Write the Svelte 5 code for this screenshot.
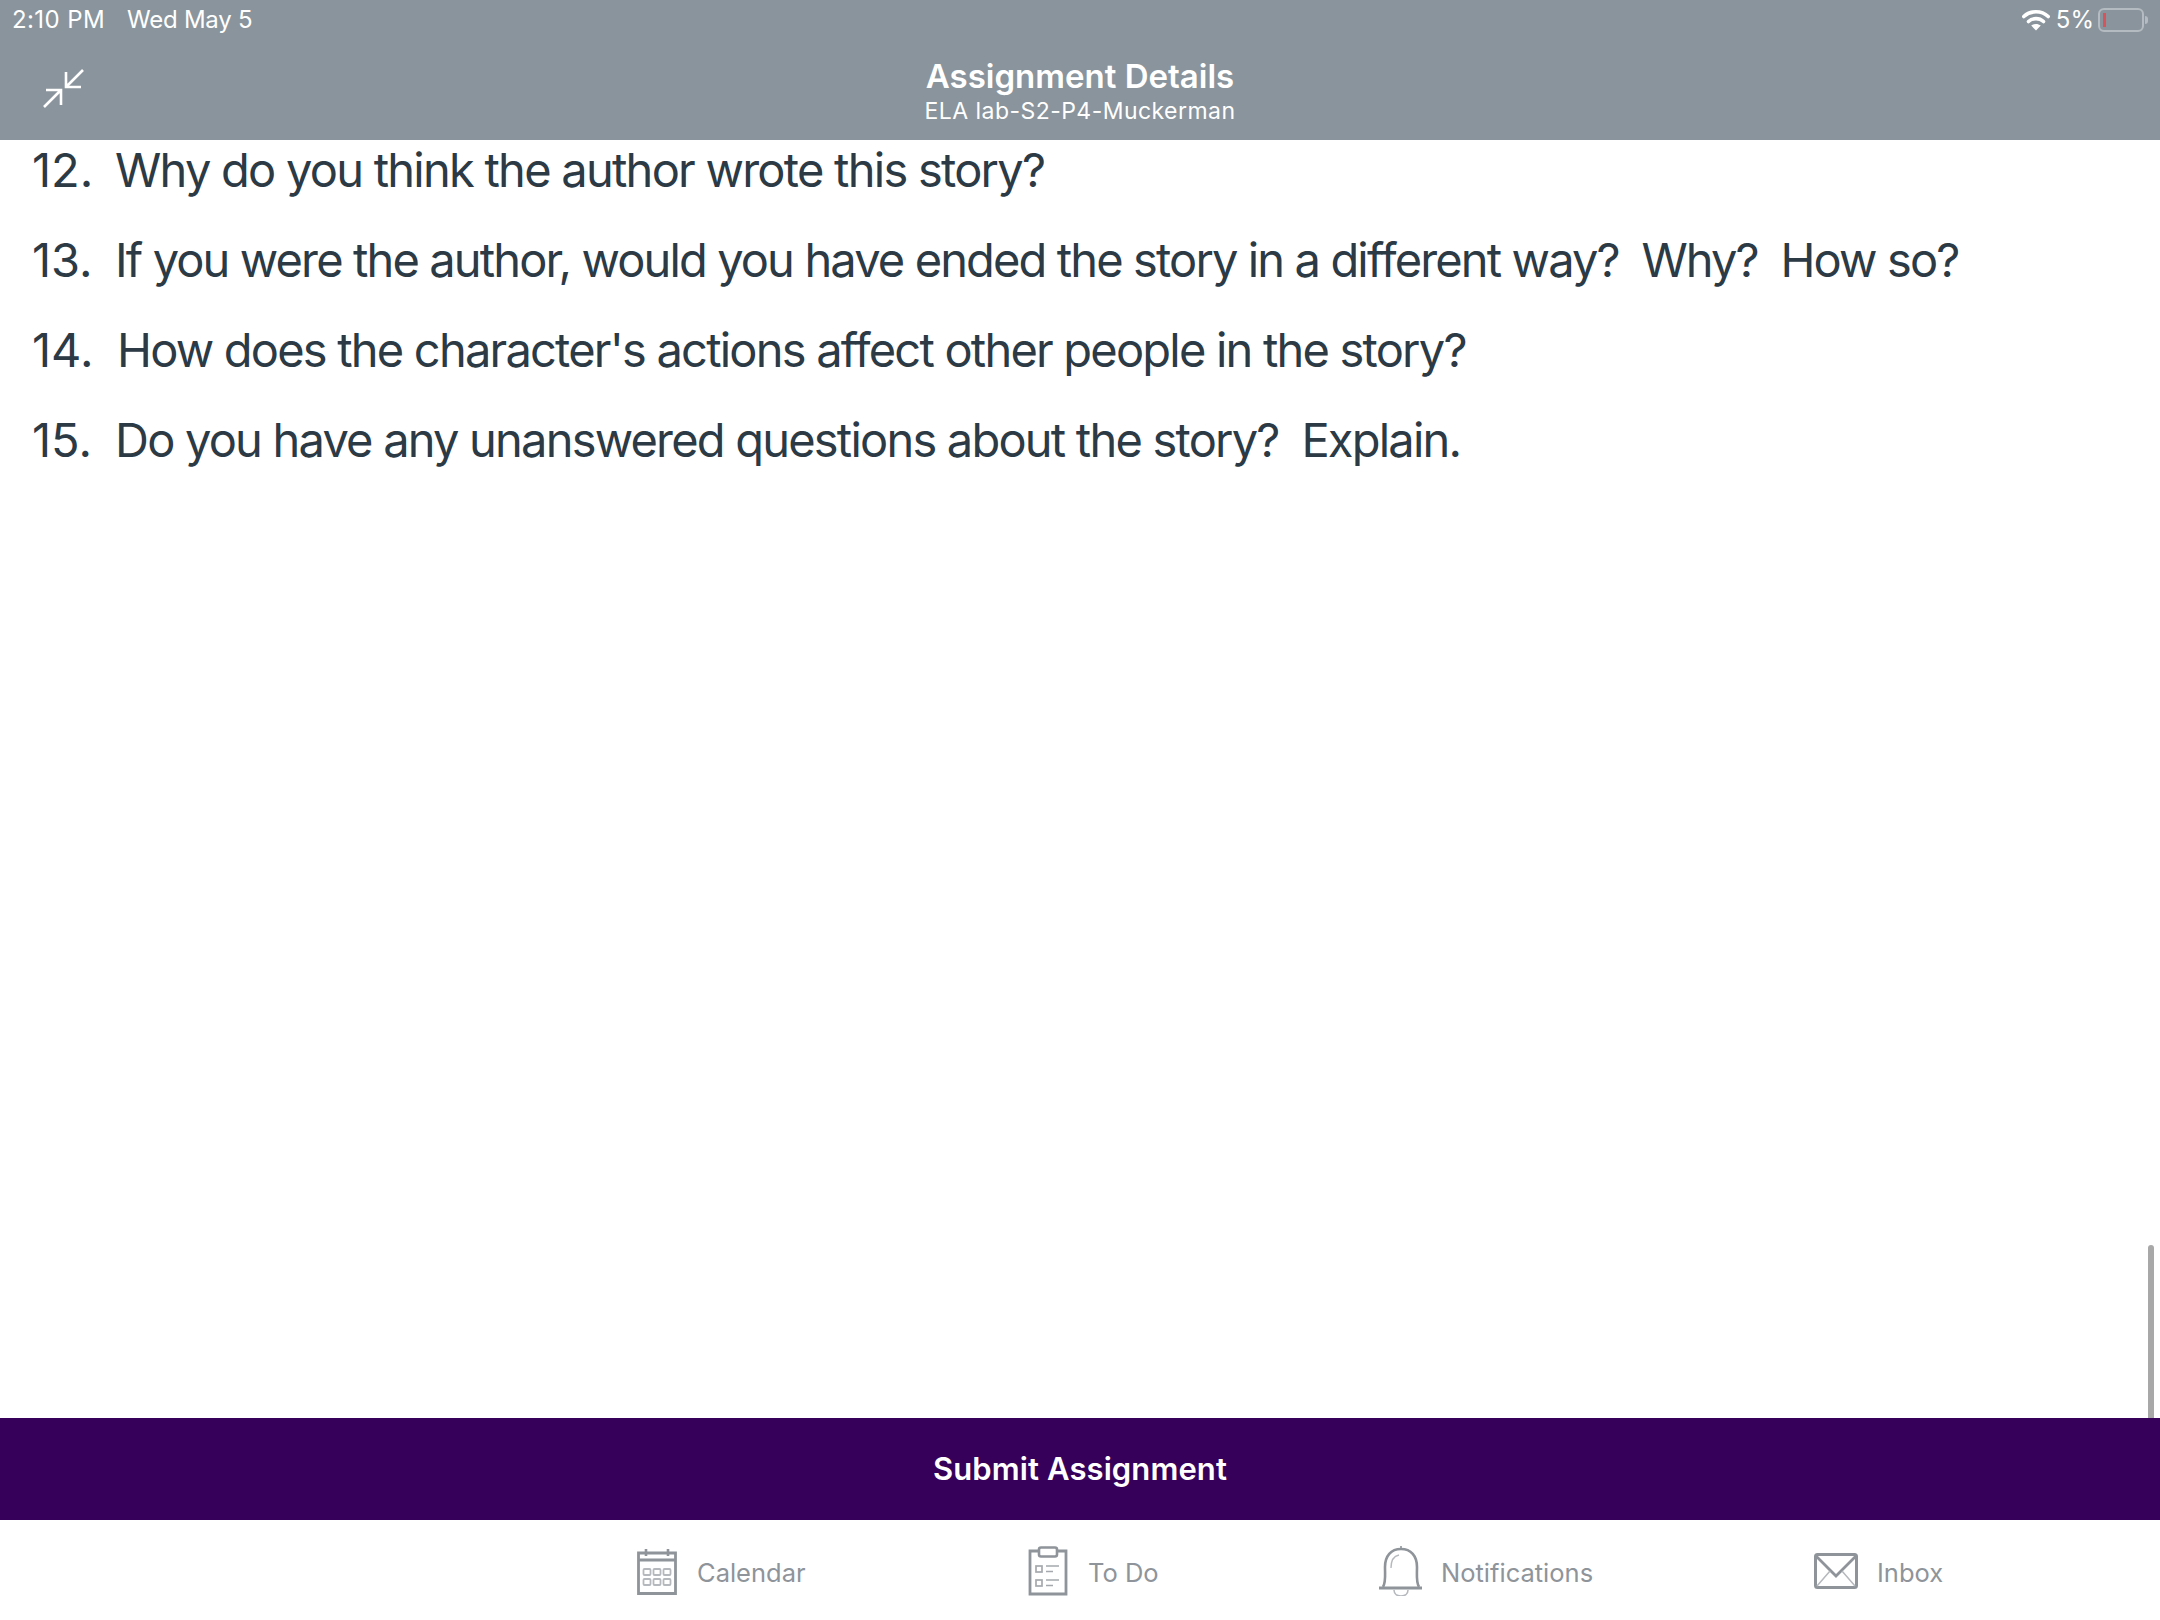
<script>
  const questions = [
    { n: '12.', gap: 'g1', cls: 'ls-a', t: 'Why do you think the author wrote this story?' },
    { n: '13.', gap: 'g1', cls: 'ls-c', t: 'If you were the author, would you have ended the story in a different way?\u00a0 Why?\u00a0 How so?' },
    { n: '14.', gap: 'g2', cls: 'ls-b', t: "How does the character's actions affect other people in the story?" },
    { n: '15.', gap: 'g1', cls: 'ls-b', t: 'Do you have any unanswered questions about the story?\u00a0 Explain.' }
  ];
</script>

<div class="app">
  <header class="head">
    <div class="status">
      <div class="status-left"><span>2:10 PM</span><span>Wed May 5</span></div>
      <div class="status-right">
        <svg class="wifi" width="28" height="22" viewBox="0 0 28 22">
          <path d="M1.8 7.5C8.5 1.2 19.5 1.2 26.2 7.5" fill="none" stroke="#fff" stroke-width="3.6" stroke-linecap="round"/>
          <path d="M6.5 12.5C10.8 8.6 17.2 8.6 21.5 12.5" fill="none" stroke="#fff" stroke-width="3.6" stroke-linecap="round"/>
          <path d="M14 21.5L9.2 16.6C12 14.4 16 14.4 18.8 16.6Z" fill="#fff"/>
        </svg>
        <span>5%</span>
        <div class="battery"><div class="charge"></div></div>
        <div class="nub"></div>
      </div>
    </div>
    <div class="title-row">
      <svg class="collapse" width="44" height="44" viewBox="0 0 44 44">
        <path d="M2 39L19 22M4 22H19V37M41 2L24 19M24 4V19H39" fill="none" stroke="#fff" stroke-width="2.6"/>
      </svg>
      <div class="titles">
        <div class="title">Assignment Details</div>
        <div class="subtitle">ELA lab-S2-P4-Muckerman</div>
      </div>
    </div>
  </header>

  <main class="content">
    {#each questions as q}
      <p class="q {q.cls}"><span class="num {q.gap}">{q.n}</span>{q.t}</p>
    {/each}
    <div class="scrollbar"></div>
  </main>

  <button class="submit">Submit Assignment</button>

  <nav class="tabs">
    <div class="tab cal">
      <svg width="40" height="48" viewBox="0 0 40 48" fill="none" stroke="#8e949a">
        <path d="M1.5 6H38.5V46.5H1.5Z" stroke-width="2.8"/>
        <path d="M1.5 13H38.5" stroke-width="2.8"/>
        <path d="M9 2V9M31 2V9" stroke-width="2.6"/>
        <g stroke="#b5b9bd" stroke-width="1.8">
          <rect x="6.5" y="22" width="7" height="6" rx="1"/><rect x="16.5" y="22" width="7" height="6" rx="1"/><rect x="26.5" y="22" width="7" height="6" rx="1"/>
          <rect x="6.5" y="32" width="7" height="6" rx="1"/><rect x="16.5" y="32" width="7" height="6" rx="1"/><rect x="26.5" y="32" width="7" height="6" rx="1"/>
        </g>
      </svg>
      <span>Calendar</span>
    </div>
    <div class="tab todo">
      <svg width="40" height="50" viewBox="0 0 40 50" fill="none" stroke="#8e949a">
        <path d="M11 5H2V48H38V5H29" stroke-width="2.8"/>
        <rect x="11" y="1.5" width="18" height="9" rx="2" stroke-width="2.6"/>
        <g stroke="#a5a9ad" stroke-width="1.7">
          <rect x="8" y="20" width="6" height="6"/><rect x="8" y="34" width="6" height="6"/>
          <path d="M18 20H31M18 25.5H25M18 34H31M18 39.5H25"/>
        </g>
      </svg>
      <span>To Do</span>
    </div>
    <div class="tab notif">
      <svg width="46" height="50" viewBox="0 0 46 50" fill="none" stroke="#8e949a">
        <path d="M1 42H44" stroke-width="3.2"/>
        <path d="M5 41C8 36 7 30 7 21C7 10 13 3 23 3C33 3 39 10 39 21C39 30 38 36 41 41" stroke-width="2.6"/>
        <path d="M23 0V3" stroke-width="1.6"/>
        <path d="M13 22C13 14 16 10 21 9" stroke="#b5b9bd" stroke-width="1.4"/>
        <path d="M16 44C16 52 30 52 30 44" stroke="#b5b9bd" stroke-width="1.6"/>
      </svg>
      <span>Notifications</span>
    </div>
    <div class="tab inbox">
      <svg width="44" height="36" viewBox="0 0 44 36" fill="none" stroke="#8e949a">
        <rect x="1.5" y="1.5" width="41" height="33" rx="2" stroke-width="3"/>
        <path d="M2 3L22 23L42 3" stroke-width="2.8"/>
        <path d="M3 33L16 18M41 33L28 18" stroke="#b5b9bd" stroke-width="1.5"/>
      </svg>
      <span>Inbox</span>
    </div>
  </nav>
</div>

<style>
  :global(body) { margin: 0; background: #fff; }
  .app {
    width: 2160px;
    height: 1620px;
    display: flex;
    flex-direction: column;
    overflow: hidden;
    font-family: Inter, "Liberation Sans", sans-serif;
  }
  .head { height: 140px; flex: none; background: #8a949c; color: #fff; position: relative; }
  .status {
    height: 39px;
    display: flex;
    justify-content: space-between;
    align-items: center;
    font-size: 24px;
    padding: 0 12px 0 12px;
  }
  .status-left { display: flex; gap: 22px; letter-spacing: -0.25px; }
  .status-left span:first-child { letter-spacing: 0.4px; }
  .status-right { display: flex; align-items: center; gap: 6px; }
  .battery {
    width: 46px; height: 24px; box-sizing: border-box;
    border: 2px solid #b4bbc1; border-radius: 6px;
    padding: 3px; margin-left: -2px;
  }
  .charge { width: 3px; height: 100%; background: #d9545a; }
  .nub { width: 3px; height: 8px; background: #b4bbc1; border-radius: 0 3px 3px 0; margin-left: -5px; }
  .title-row { display: flex; justify-content: center; position: relative; }
  .collapse { position: absolute; left: 42px; top: 29px; }
  .titles { text-align: center; padding-top: 16px; }
  .title { font-size: 33px; font-weight: 600; line-height: 42px; }
  .subtitle { font-size: 23px; line-height: 28px; letter-spacing: 0.45px; }
  .content { flex: 1; min-height: 0; position: relative; padding: 0 32px; color: #2c3a45; }
  .q { margin: 0; font-size: 47px; line-height: 90px; white-space: pre; }
  .ls-a { letter-spacing: -1.75px; }
  .ls-b { letter-spacing: -1.79px; }
  .ls-c { letter-spacing: -1.87px; }
  .q:first-child { margin-top: -15px; }
  .num { display: inline-block; letter-spacing: 0; }
  .g1 { width: 83px; }
  .g2 { width: 85px; }
  .scrollbar {
    position: absolute; right: 6px; bottom: 0;
    width: 6px; height: 173px; background: #a8a8a8; border-radius: 3px 3px 0 0;
  }
  .submit {
    flex: none; height: 102px; border: 0; padding: 0 0 2px;
    background: #36005a; color: #fff;
    font: 600 31px Inter, "Liberation Sans", sans-serif;
    letter-spacing: 0.1px;
  }
  .tabs { flex: none; height: 100px; display: flex; position: relative; color: #8e949a; font-size: 25.5px; }
  .tab { display: flex; align-items: center; gap: 20px; position: absolute; top: 26px; height: 50px; }
  .tab span { position: relative; top: 1px; }
  .cal { left: 637px; }
  .todo { left: 1028px; }
  .notif { left: 1378px; gap: 17px; }
  .inbox { left: 1814px; gap: 19px; }
</style>
